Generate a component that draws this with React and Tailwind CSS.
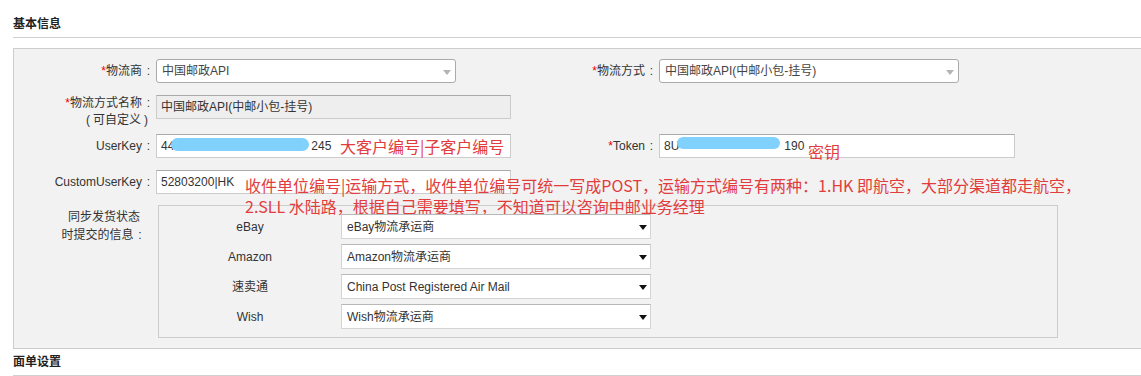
import React from 'react'

function Star() {
  return <span className="text-[#e00]">*</span>
}

// fullwidth colon drawn centred in its em box, as the reference font does
function Colon() {
  return <span className="inline-block w-[13px] text-center">:</span>
}

// select2-style dropdown used in the top row
function Select2({ value, width }) {
  return (
    <div className={`relative h-[24px] ${width} shrink-0 bg-white border border-[#aaa] rounded-[3px] flex items-center pl-[5px] text-[12px] text-[#444]`}>
      {value}
      <span className="absolute right-[4px] top-[10px] w-0 h-0 border-x-[4px] border-x-transparent border-t-[5px] border-t-[#b4b4b4]" />
    </div>
  )
}

// native select inside the sync box
function NativeSelect({ value }) {
  return (
    <div className="relative h-[25px] w-[310px] shrink-0 bg-white border border-[#d4d4d4] border-t-[#b8b8b8] flex items-center pl-[5px] text-[12px] text-[#333]">
      {value}
      <span className="absolute right-[3px] top-[10px] w-0 h-0 border-x-[4px] border-x-transparent border-t-[5px] border-t-[#111]" />
    </div>
  )
}

function Input({ children, width = 'w-[355px]', readOnly, note }) {
  return (
    <div
      className={`relative h-[24px] ${width} shrink-0 border border-[#ccc] border-t-[#aaa] flex items-center pl-[4px] text-[12px] text-[#333] whitespace-nowrap ${
        readOnly ? 'bg-[#eeeeee] border-[#c4c4c4]' : 'bg-white'
      }`}
    >
      {children}
      {note}
    </div>
  )
}

const Blob = ({ className }) => (
  <span className={`inline-block rounded-full bg-[#80d1fc] ${className}`} />
)

const red = "text-[16px] text-[#e23c3c] font-['Noto_Sans_CJK_SC',sans-serif] whitespace-nowrap"

export default function App() {
  return (
    <div className="w-[1141px] h-[376px] overflow-hidden bg-white text-[12px] text-[#333] font-['Liberation_Sans','Noto_Sans_CJK_SC',sans-serif]">
      {/* 基本信息 heading */}
      <div className="ml-[13px] h-[38px] pt-[16px] leading-[16px] font-bold text-[#222] border-b border-[#d0d0d0]">
        基本信息
      </div>

      {/* main panel */}
      <div className="ml-[13px] mt-[10px] h-[301px] bg-[#f2f2f2] border border-r-0 border-[#ccc] pt-[10px]">
        {/* row 1 */}
        <div className="flex items-center">
          <div className="flex items-center w-[497px] shrink-0">
            <div className="w-[142px] text-right pr-[1px]"><Star />物流商<Colon /></div>
            <Select2 value="中国邮政API" width="w-[300px]" />
          </div>
          <div className="w-[148px] text-right pr-[1px]"><Star />物流方式<Colon /></div>
          <Select2 value="中国邮政API(中邮小包-挂号)" width="w-[300px]" />
        </div>

        {/* row 2 */}
        <div className="flex items-start mt-[12px] h-[34px]">
          <div className="w-[142px] text-right pr-[1px] leading-[17px]">
            <div><Star />物流方式名称<Colon /></div>
            <div className="pr-[4px]">
              <span className="inline-block w-[10px] text-center">(</span>
              可自定义
              <span className="inline-block w-[10px] text-center">)</span>
            </div>
          </div>
          <Input readOnly>中国邮政API(中邮小包-挂号)</Input>
        </div>

        {/* row 3 */}
        <div className="flex items-center mt-[5px]">
          <div className="flex items-center w-[497px] shrink-0">
            <div className="w-[142px] text-right pr-[1px]">UserKey<Colon /></div>
            <Input
              note={
                <span className={`absolute left-[183px] top-[-1px] leading-[24px] ${red}`}>大客户编号|子客户编号</span>
              }
            >
              <span>44</span>
              <Blob className="-ml-[3px] w-[138px] h-[13px] mb-[3px]" />
              <span className="ml-[2px]">245</span>
            </Input>
          </div>
          <div className="w-[148px] text-right pr-[1px]"><Star />Token<Colon /></div>
          <Input
            width="w-[356px]"
            note={<span className={`absolute left-[148px] top-[4px] leading-[24px] ${red}`}>密钥</span>}
          >
            <span>8U</span>
            <Blob className="-ml-[2px] w-[103px] h-[12px] mb-[7px]" />
            <span className="ml-[4px]">190</span>
          </Input>
        </div>

        {/* row 4 */}
        <div className="relative flex items-center mt-[12px]">
          <div className="w-[142px] text-right pr-[1px]">CustomUserKey<Colon /></div>
          <Input>52803200|HK</Input>
          <div className={`absolute left-[231px] top-[5px] leading-[21px] ${red}`}>
            <div>收件单位编号|运输方式，收件单位编号可统一写成POST，运输方式编号有两种：1.HK 即航空，大部分渠道都走航空，</div>
            <div>2.SLL 水陆路，根据自己需要填写，不知道可以咨询中邮业务经理</div>
          </div>
        </div>

        {/* row 5: sync info */}
        <div className="flex items-start mt-[11px]">
          <div className="w-[142px] flex justify-end pr-[5px] pt-[3px]">
            <div className="w-[94px] text-center leading-[18px]">
              <div>同步发货状态</div>
              <div>时提交的信息<Colon /></div>
            </div>
          </div>
          <div className="ml-[2px] w-[900px] h-[133px] border border-[#ccc] pt-[8px] flex flex-col gap-[5px]">
            {[
              ['eBay', 'eBay物流承运商'],
              ['Amazon', 'Amazon物流承运商'],
              ['速卖通', 'China Post Registered Air Mail'],
              ['Wish', 'Wish物流承运商'],
            ].map(([name, value]) => (
              <div key={name} className="flex items-center">
                <div className="w-[182px] text-center text-[#333]">{name}</div>
                <NativeSelect value={value} />
              </div>
            ))}
          </div>
        </div>
      </div>

      {/* 面单设置 heading */}
      <div className="ml-[13px] h-[27px] pt-[5px] leading-[16px] font-bold text-[#222] border-b border-[#d0d0d0]">
        面单设置
      </div>
    </div>
  )
}
